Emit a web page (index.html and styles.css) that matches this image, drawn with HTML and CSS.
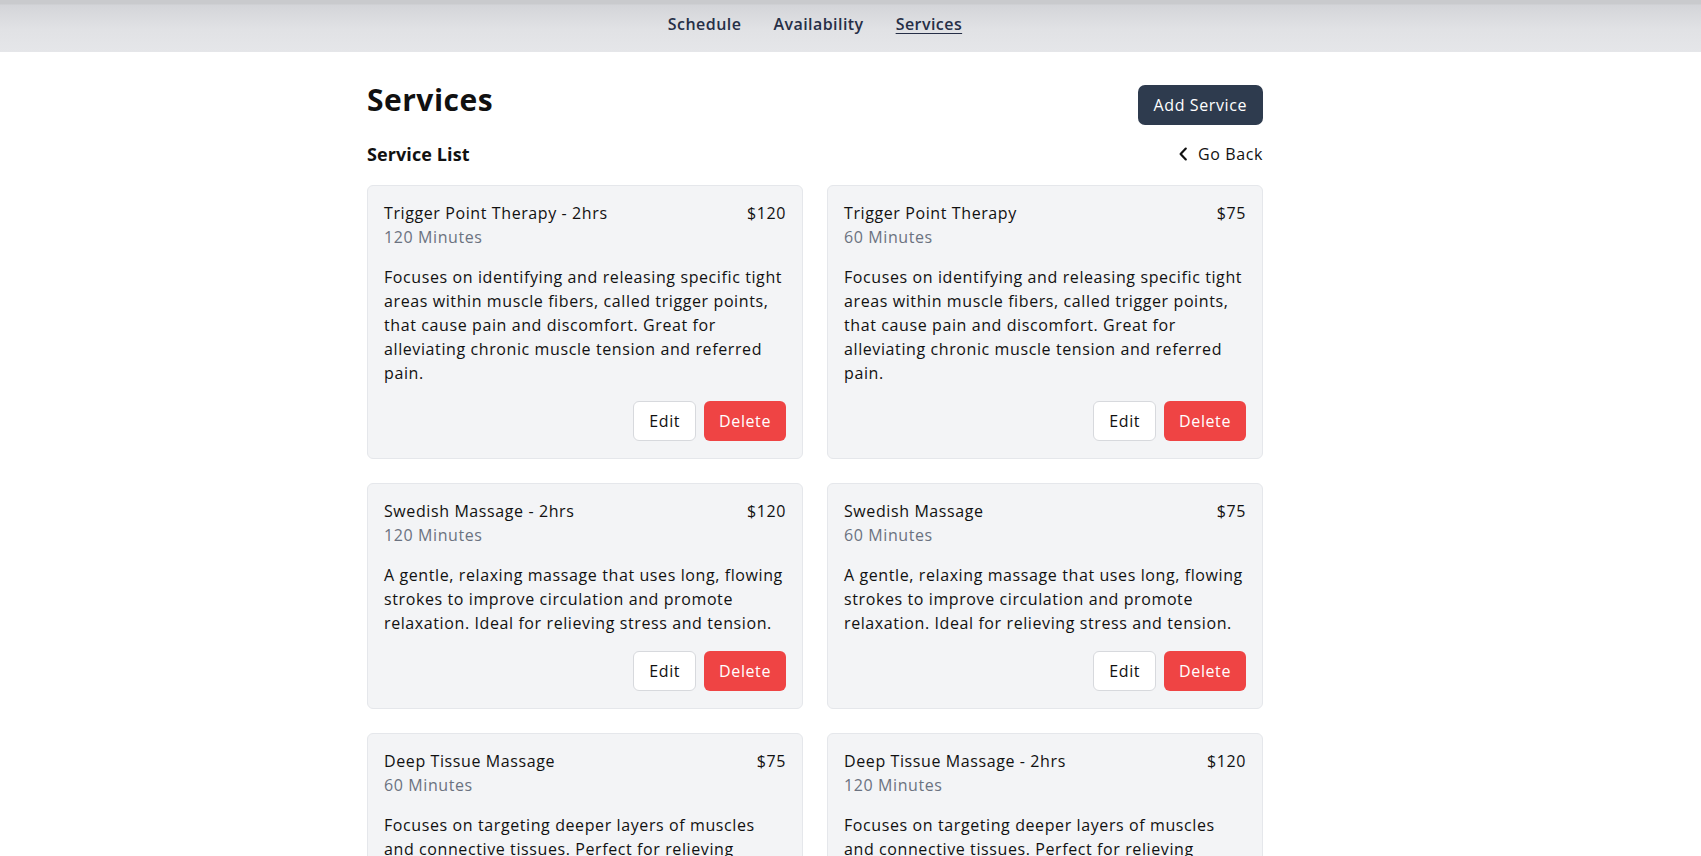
FILE: index.html
```html
<!DOCTYPE html>
<html lang="en">
<head>
<meta charset="utf-8">
<title>Services</title>
<link rel="stylesheet" href="styles.css">
</head>
<body>
<header class="topbar">
  <nav class="nav">
    <a class="nav-link" href="#">Schedule</a>
    <a class="nav-link" href="#">Availability</a>
    <a class="nav-link active" href="#">Services</a>
  </nav>
</header>
<div class="page">
  <main class="container">
    <div class="title-row">
      <h1 class="title">Services</h1>
      <button class="btn-primary">Add Service</button>
    </div>
    <div class="sub-row">
      <h2 class="subtitle">Service List</h2>
      <a class="back" href="#"><svg class="chev" width="10" height="14" viewBox="0 0 10 14"><polyline points="7.8,1.6 2.6,7 7.8,12.4" fill="none" stroke="#111" stroke-width="2.2" stroke-linecap="round" stroke-linejoin="round"/></svg>Go Back</a>
    </div>
    <div class="grid">
      <div class="card">
        <div class="card-head"><span class="name">Trigger Point Therapy - 2hrs</span><span class="price">$120</span></div>
        <div class="mins">120 Minutes</div>
        <p class="desc">Focuses on identifying and releasing specific tight areas within muscle fibers, called trigger points, that cause pain and discomfort. Great for alleviating chronic muscle tension and referred pain.</p>
        <div class="actions"><button class="btn-edit">Edit</button><button class="btn-delete">Delete</button></div>
      </div>
      <div class="card">
        <div class="card-head"><span class="name">Trigger Point Therapy</span><span class="price">$75</span></div>
        <div class="mins">60 Minutes</div>
        <p class="desc">Focuses on identifying and releasing specific tight areas within muscle fibers, called trigger points, that cause pain and discomfort. Great for alleviating chronic muscle tension and referred pain.</p>
        <div class="actions"><button class="btn-edit">Edit</button><button class="btn-delete">Delete</button></div>
      </div>
      <div class="card">
        <div class="card-head"><span class="name">Swedish Massage - 2hrs</span><span class="price">$120</span></div>
        <div class="mins">120 Minutes</div>
        <p class="desc">A gentle, relaxing massage that uses long, flowing strokes to improve circulation and promote relaxation. Ideal for relieving stress and tension.</p>
        <div class="actions"><button class="btn-edit">Edit</button><button class="btn-delete">Delete</button></div>
      </div>
      <div class="card">
        <div class="card-head"><span class="name">Swedish Massage</span><span class="price">$75</span></div>
        <div class="mins">60 Minutes</div>
        <p class="desc">A gentle, relaxing massage that uses long, flowing strokes to improve circulation and promote relaxation. Ideal for relieving stress and tension.</p>
        <div class="actions"><button class="btn-edit">Edit</button><button class="btn-delete">Delete</button></div>
      </div>
      <div class="card">
        <div class="card-head"><span class="name">Deep Tissue Massage</span><span class="price">$75</span></div>
        <div class="mins">60 Minutes</div>
        <p class="desc">Focuses on targeting deeper layers of muscles and connective tissues. Perfect for relieving chronic aches, stiffness and muscle tension.</p>
        <div class="actions"><button class="btn-edit">Edit</button><button class="btn-delete">Delete</button></div>
      </div>
      <div class="card">
        <div class="card-head"><span class="name">Deep Tissue Massage - 2hrs</span><span class="price">$120</span></div>
        <div class="mins">120 Minutes</div>
        <p class="desc">Focuses on targeting deeper layers of muscles and connective tissues. Perfect for relieving chronic aches, stiffness and muscle tension.</p>
        <div class="actions"><button class="btn-edit">Edit</button><button class="btn-delete">Delete</button></div>
      </div>
    </div>
  </main>
</div>
</body>
</html>
```
FILE: styles.css
```css
* { box-sizing: border-box; }
html, body { margin: 0; padding: 0; background: #fff; }
body {
  font-family: "Open Sans", "Noto Sans", sans-serif;
  color: #111;
  font-size: 16px;
  line-height: 24px;
  letter-spacing: 0.6px;
}
.topbar {
  height: 52px;
  background: linear-gradient(to bottom, #c9cacd 0, #c9cacd 4px, #d4d5d9 5px, #e1e2e5 30px, #e5e6e9 52px);
  padding-right: 71px;
  display: flex;
  justify-content: center;
  align-items: center;
}
.nav {
  display: flex;
  gap: 32px;
  margin-top: -5px;
}
.nav-link {
  font-size: 16px;
  font-weight: 600;
  letter-spacing: 0.45px;
  color: #262f47;
  text-decoration: none;
  line-height: 24px;
}
.nav-link.active { text-decoration: underline; text-underline-offset: 3px; }
.page { padding-right: 71px; }
.container {
  max-width: 896px;
  margin: 0 auto;
  padding-top: 30px;
}
.title-row {
  display: flex;
  justify-content: space-between;
  align-items: flex-start;
}
.title {
  margin: 0;
  font-size: 30px;
  line-height: 36px;
  font-weight: 700;
  letter-spacing: 0.5px;
}
.btn-primary {
  margin-top: 3px;
  height: 40px;
  padding: 0 16px;
  border: none;
  border-radius: 7px;
  background: #2e3b4e;
  color: #fff;
  font-family: inherit;
  font-size: 16px;
  font-weight: 500;
  letter-spacing: 0.6px;
}
.sub-row {
  margin-top: 15px;
  margin-bottom: 17px;
  display: flex;
  justify-content: space-between;
  align-items: center;
}
.subtitle {
  margin: 0;
  font-size: 18px;
  line-height: 28px;
  font-weight: 700;
  letter-spacing: 0.1px;
}
.back {
  display: flex;
  align-items: center;
  color: #111;
  text-decoration: none;
  font-size: 16px;
}
.chev { margin-right: 10px; }
.grid {
  display: grid;
  grid-template-columns: 1fr 1fr;
  gap: 24px;
}
.card {
  background: #f3f4f6;
  border: 1px solid #e5e7eb;
  border-radius: 6px;
  padding: 15px 16px 17px;
}
.card-head {
  display: flex;
  justify-content: space-between;
}
.name, .price { font-weight: 500; }
.mins { color: #6b7280; }
.desc {
  margin: 16px 0 0;
  color: #111;
}
.actions {
  margin-top: 16px;
  display: flex;
  justify-content: flex-end;
  gap: 8px;
}
.btn-edit, .btn-delete {
  height: 40px;
  padding: 0 15px;
  border-radius: 6px;
  font-family: inherit;
  font-size: 16px;
  letter-spacing: 0.6px;
}
.btn-edit {
  background: #fff;
  border: 1px solid #d7d9dd;
  color: #111;
}
.btn-delete {
  background: #ef4444;
  border: none;
  color: #fff;
}
```
